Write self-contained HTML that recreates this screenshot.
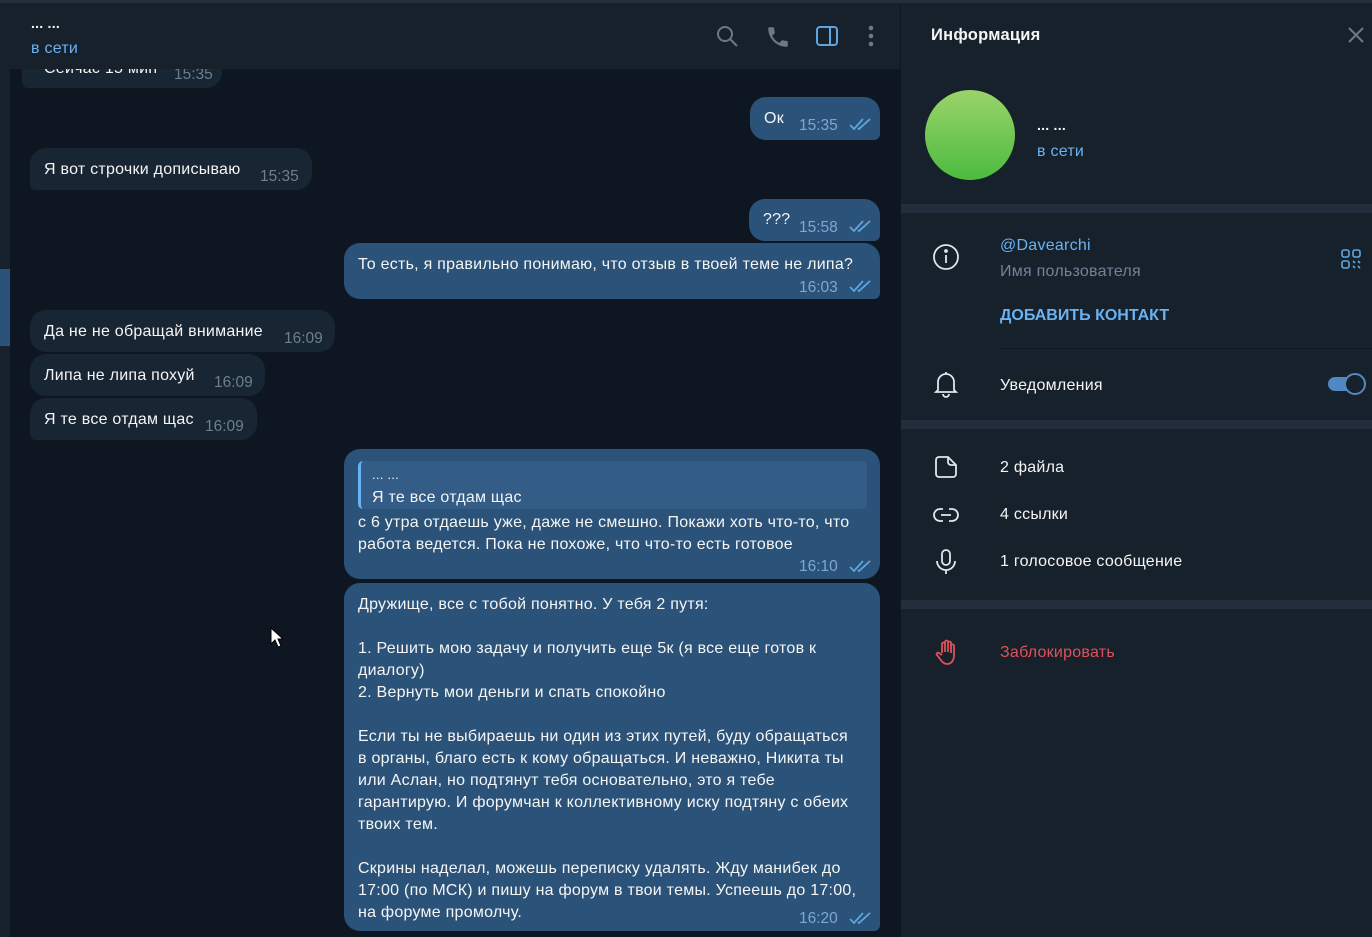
<!DOCTYPE html>
<html><head><meta charset="utf-8">
<style>
*{margin:0;padding:0;box-sizing:border-box}
body{width:1372px;height:937px;overflow:hidden;background:#0e1621;font-family:"Liberation Sans","Noto Sans CJK SC",sans-serif;font-size:16px;letter-spacing:0.25px;color:#f5f5f5;position:relative}
.a{position:absolute;white-space:nowrap}
.b{position:absolute;border-radius:16px}
.in{background:#182533}
.out{background:#2b5278}
.t{position:absolute;font-size:15.5px;letter-spacing:0}
.ti{color:#6d7f8f}
.to{color:#7da8d3}
.ck{position:absolute}
.ml{position:absolute;left:14px;line-height:22px;white-space:nowrap}
</style></head><body>
<div class="a" style="left:0;top:0;width:1372px;height:3px;background:#242f3d"></div>
<div class="a" style="left:0;top:3px;width:10px;height:934px;background:#17212b"></div>
<div class="a" style="left:0;top:269px;width:10px;height:77px;background:#2b5278"></div>

<div class="b in" style="left:22px;top:40px;width:200px;height:48px;border-bottom-left-radius:6px"><span class="a" style="left:22px;top:20px">Сейчас 15 мин</span><span class="t ti" style="left:152px;top:26px">15:35</span></div>

<div class="b out" style="left:750px;top:97px;width:130px;height:43px;border-bottom-right-radius:6px"><span class="a" style="left:14px;top:13px">Ок</span><span class="t to" style="left:49px;top:20px">15:35</span>
<svg class="ck" style="left:99px;top:20px" width="24" height="14" viewBox="0 0 24 14" fill="none" stroke="#5fa6e0" stroke-width="1.8"><path d="M1 8l4 4L14 2M9 11l1 1L21 2"/></svg></div>

<div class="b in" style="left:30px;top:148px;width:282px;height:42px;border-bottom-left-radius:6px"><span class="a" style="left:14px;top:13px">Я вот строчки дописываю</span><span class="t ti" style="left:230px;top:20px">15:35</span></div>

<div class="b out" style="left:749px;top:199px;width:131px;height:42px;border-bottom-right-radius:6px"><span class="a" style="left:14px;top:12px">???</span><span class="t to" style="left:50px;top:20px">15:58</span>
<svg class="ck" style="left:100px;top:20px" width="24" height="14" viewBox="0 0 24 14" fill="none" stroke="#5fa6e0" stroke-width="1.8"><path d="M1 8l4 4L14 2M9 11l1 1L21 2"/></svg></div>

<div class="b out" style="left:344px;top:243px;width:536px;height:56px;border-bottom-right-radius:6px"><span class="a" style="left:14px;top:13px">То есть, я правильно понимаю, что отзыв в твоей теме не липа?</span><span class="t to" style="left:455px;top:36px">16:03</span>
<svg class="ck" style="left:505px;top:36px" width="24" height="14" viewBox="0 0 24 14" fill="none" stroke="#5fa6e0" stroke-width="1.8"><path d="M1 8l4 4L14 2M9 11l1 1L21 2"/></svg></div>

<div class="b in" style="left:30px;top:310px;width:305px;height:42px"><span class="a" style="left:14px;top:13px">Да не не обращай внимание</span><span class="t ti" style="left:254px;top:20px">16:09</span></div>
<div class="b in" style="left:30px;top:354px;width:235px;height:42px"><span class="a" style="left:14px;top:13px">Липа не липа похуй</span><span class="t ti" style="left:184px;top:20px">16:09</span></div>
<div class="b in" style="left:30px;top:398px;width:227px;height:42px;border-bottom-left-radius:6px"><span class="a" style="left:14px;top:13px">Я те все отдам щас</span><span class="t ti" style="left:175px;top:20px">16:09</span></div>

<div class="b out" style="left:344px;top:449px;width:536px;height:130px">
<div class="a" style="left:14px;top:12px;width:509px;height:48px;background:#335d86;border-radius:5px;border-left:3px solid #6ab2f2">
<span class="a" style="left:11px;top:6px;font-size:13px">... ...</span>
<span class="a" style="left:11px;top:28px;font-size:16px">Я те все отдам щас</span></div>
<div class="ml" style="top:63px">с 6 утра отдаешь уже, даже не смешно. Покажи хоть что-то, что<br>работа ведется. Пока не похоже, что что-то есть готовое</div>
<span class="t to" style="left:455px;top:109px">16:10</span>
<svg class="ck" style="left:505px;top:110px" width="24" height="14" viewBox="0 0 24 14" fill="none" stroke="#5fa6e0" stroke-width="1.8"><path d="M1 8l4 4L14 2M9 11l1 1L21 2"/></svg></div>

<div class="b out" style="left:344px;top:583px;width:536px;height:348px;border-bottom-right-radius:6px">
<div class="ml" style="top:11px">Дружище, все с тобой понятно. У тебя 2 путя:<br><br>1. Решить мою задачу и получить еще 5к (я все еще готов к<br>диалогу)<br>2. Вернуть мои деньги и спать спокойно<br><br>Если ты не выбираешь ни один из этих путей, буду обращаться<br>в органы, благо есть к кому обращаться. И неважно, Никита ты<br>или Аслан, но подтянут тебя основательно, это я тебе<br>гарантирую. И форумчан к коллективному иску подтяну с обеих<br>твоих тем.<br><br>Скрины наделал, можешь переписку удалять. Жду манибек до<br>17:00 (по МСК) и пишу на форум в твои темы. Успеешь до 17:00,<br>на форуме промолчу.</div>
<span class="t to" style="left:455px;top:327px">16:20</span>
<svg class="ck" style="left:505px;top:328px" width="24" height="14" viewBox="0 0 24 14" fill="none" stroke="#5fa6e0" stroke-width="1.8"><path d="M1 8l4 4L14 2M9 11l1 1L21 2"/></svg></div>

<svg class="a" style="left:270px;top:627px" width="14" height="22" viewBox="0 0 14 22"><path d="M1 1v16l4-4 3 7 3-1-3-7h5z" fill="#fff" stroke="#000" stroke-width="1"/></svg>

<div class="a" style="left:10px;top:3px;width:890px;height:66px;background:#17212b"></div>
<span class="a" style="left:31px;top:15px;font-size:14px;font-weight:bold">... ...</span>
<span class="a" style="left:31px;top:40px;color:#6ab2f2;font-size:16px">в сети</span>
<svg class="a" style="left:715px;top:24px" width="26" height="26" viewBox="0 0 26 26" fill="none" stroke="#6d7883" stroke-width="2"><circle cx="10" cy="10" r="7"/><path d="M15 15l7 7"/></svg>
<svg class="a" style="left:765px;top:24px" width="26" height="26" viewBox="0 0 24 24" fill="#6d7883"><path d="M6.6 10.8c1.4 2.8 3.8 5.1 6.6 6.6l2.2-2.2c.3-.3.7-.4 1-.2 1.1.4 2.3.6 3.6.6.6 0 1 .4 1 1V20c0 .6-.4 1-1 1C10.6 21 3 13.4 3 4c0-.6.4-1 1-1h3.5c.6 0 1 .4 1 1 0 1.3.2 2.5.6 3.6.1.3 0 .7-.2 1z"/></svg>
<svg class="a" style="left:815px;top:25px" width="24" height="22" viewBox="0 0 24 22" fill="none" stroke="#5fa6e0" stroke-width="2"><rect x="2" y="2" width="20" height="18" rx="3"/><path d="M15 2v18"/></svg>
<svg class="a" style="left:866px;top:25px" width="10" height="22" viewBox="0 0 10 22" fill="#6d7883"><circle cx="5" cy="3" r="2.3"/><circle cx="5" cy="11" r="2.3"/><circle cx="5" cy="19" r="2.3"/></svg>

<div class="a" style="left:900px;top:3px;width:472px;height:934px;background:#17212b;border-left:1px solid #0e1621"></div>
<span class="a" style="left:931px;top:26px;font-size:16.5px;font-weight:bold">Информация</span>
<svg class="a" style="left:1347px;top:26px" width="18" height="18" viewBox="0 0 18 18" stroke="#6d7883" stroke-width="2"><path d="M2 2l14 14M16 2L2 16"/></svg>
<div class="a" style="left:925px;top:90px;width:90px;height:90px;border-radius:50%;background:linear-gradient(#9bd36a,#4cbb3f)"></div>
<span class="a" style="left:1037px;top:117px;font-size:14px;font-weight:bold">... ...</span>
<span class="a" style="left:1037px;top:143px;color:#6ab2f2">в сети</span>
<div class="a" style="left:901px;top:204px;width:471px;height:9px;background:#232e3c"></div>

<svg class="a" style="left:932px;top:243px" width="28" height="28" viewBox="0 0 28 28" fill="none" stroke="#e0e6ec" stroke-width="1.8"><circle cx="14" cy="14" r="12"/><path d="M14 12v8"/><circle cx="14" cy="8" r="1" fill="#e0e6ec"/></svg>
<span class="a" style="left:1000px;top:237px;color:#6ab2f2">@Davearchi</span>
<span class="a" style="left:1000px;top:263px;color:#708499">Имя пользователя</span>
<svg class="a" style="left:1341px;top:249px" width="20" height="20" viewBox="0 0 20 20" fill="none" stroke="#5fa6e0" stroke-width="1.6"><rect x="1" y="1" width="7" height="7" rx="2"/><rect x="12" y="1" width="7" height="7" rx="2"/><rect x="1" y="12" width="7" height="7" rx="2"/><path d="M12 12l2 2M17 12l2 2M12 17l2 2M17 17l2 2"/></svg>
<span class="a" style="left:1000px;top:307px;color:#6ab2f2;font-weight:bold;font-size:16px;letter-spacing:0px">ДОБАВИТЬ КОНТАКТ</span>
<div class="a" style="left:1000px;top:348px;width:372px;height:1px;background:#0e1621"></div>

<svg class="a" style="left:933px;top:370px" width="26" height="28" viewBox="0 0 26 28" fill="none" stroke="#e0e6ec" stroke-width="1.8"><path d="M5 20V12a8 8 0 0116 0v8l2 2H3zM13 2v2M10 24a3 3 0 006 0"/></svg>
<span class="a" style="left:1000px;top:377px">Уведомления</span>
<div class="a" style="left:1328px;top:377px;width:34px;height:14px;border-radius:7px;background:#5288c1"></div>
<div class="a" style="left:1344px;top:373px;width:22px;height:22px;border-radius:50%;background:#17212b;border:2.5px solid #5288c1"></div>
<div class="a" style="left:901px;top:420px;width:471px;height:9px;background:#232e3c"></div>

<svg class="a" style="left:934px;top:455px" width="24" height="24" viewBox="0 0 24 24" fill="none" stroke="#e0e6ec" stroke-width="1.8"><path d="M5 2h9l8 8v9a3 3 0 01-3 3H5a3 3 0 01-3-3V5a3 3 0 013-3zM14 2v5a3 3 0 003 3h5"/></svg>
<span class="a" style="left:1000px;top:459px">2 файла</span>
<svg class="a" style="left:932px;top:506px" width="28" height="18" viewBox="0 0 28 18" fill="none" stroke="#e0e6ec" stroke-width="1.8"><path d="M11 3H8a6 6 0 000 12h3M17 3h3a6 6 0 010 12h-3M9 9h10"/></svg>
<span class="a" style="left:1000px;top:506px">4 ссылки</span>
<svg class="a" style="left:934px;top:548px" width="24" height="28" viewBox="0 0 24 28" fill="none" stroke="#e0e6ec" stroke-width="1.8"><rect x="8" y="2" width="8" height="15" rx="4"/><path d="M3 13a9 9 0 0018 0M12 22v4"/></svg>
<span class="a" style="left:1000px;top:553px">1 голосовое сообщение</span>
<div class="a" style="left:901px;top:600px;width:471px;height:9px;background:#232e3c"></div>

<svg class="a" style="left:935px;top:639px" width="24" height="28" viewBox="0 0 24 28" fill="none" stroke="#e0505a" stroke-width="1.8"><path d="M7 14V5a1.5 1.5 0 013 0v8V3a1.5 1.5 0 013 0v10V4a1.5 1.5 0 013 0v10V7a1.5 1.5 0 013 0v9c0 6-3 9-7 9-3 0-5-2-7-5l-3-4c-1-1 0-3 2-2l3 2"/></svg>
<span class="a" style="left:1000px;top:644px;color:#e0505a">Заблокировать</span>
</body></html>
